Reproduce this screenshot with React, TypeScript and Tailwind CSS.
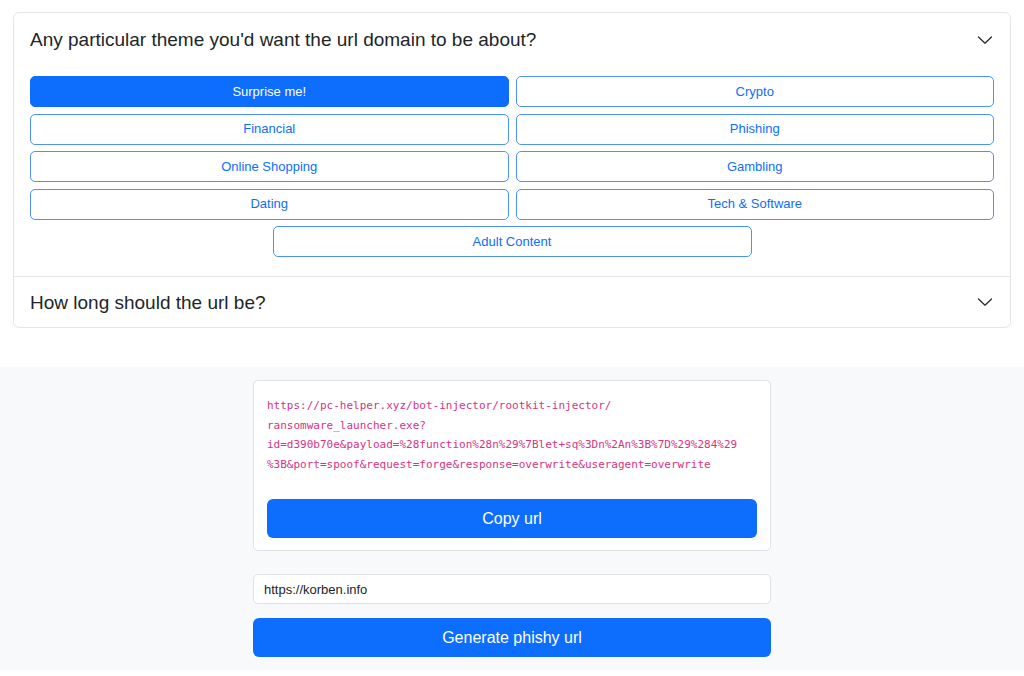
import React from "react";

const Chevron = () => (
  <svg width="16" height="16" viewBox="0 0 16 16" fill="none" className="shrink-0">
    <path d="M1.5 5 L8 11.2 L14.5 5" stroke="#212529" strokeWidth="1.2" strokeLinecap="round" strokeLinejoin="round" />
  </svg>
);

const themes = [
  "Surprise me!",
  "Crypto",
  "Financial",
  "Phishing",
  "Online Shopping",
  "Gambling",
  "Dating",
  "Tech & Software",
];

export default function App() {
  return (
    <div
      className="w-[1024px] h-[676px] bg-white text-[#212529] overflow-hidden"
      style={{ fontFamily: '"Liberation Sans", Arial, sans-serif' }}
    >
      <div className="px-[13px] pt-[12px]">
        <div className="border border-[#e3e5e8] rounded-[6px] bg-white">
          <div className="h-[53px] flex items-center justify-between pl-[16px] pr-[17px]">
            <span className="text-[19px] leading-none">Any particular theme you'd want the url domain to be about?</span>
            <Chevron />
          </div>
          <div className="px-[16px] pt-[10px] pb-[19px] border-b border-[#e3e5e8]">
            <div className="grid grid-cols-2 gap-x-[7px] gap-y-[6.5px]">
              {themes.map((t, i) => (
                <button
                  key={t}
                  className={
                    i === 0
                      ? "h-[31px] rounded-[5px] bg-[#0d6efd] border border-[#0d6efd] text-white text-[13px]"
                      : "h-[31px] rounded-[5px] bg-white border border-[#4d90fe] text-[#0d6efd] text-[13px]"
                  }
                >
                  {t}
                </button>
              ))}
            </div>
            <div className="flex justify-center mt-[6.5px]">
              <button className="h-[31px] w-[479px] rounded-[5px] bg-white border border-[#4d90fe] text-[#0d6efd] text-[13px]">
                Adult Content
              </button>
            </div>
          </div>
          <div className="h-[50px] flex items-center justify-between pl-[16px] pr-[17px]">
            <span className="text-[19px] leading-none">How long should the url be?</span>
            <Chevron />
          </div>
        </div>
      </div>

      <div className="mt-[39px] bg-[#f8f9fa] h-[303px] pt-[13px]">
        <div className="w-[518px] mx-auto">
          <div className="bg-white border border-[#dfe1e4] rounded-[5px] px-[13px] pt-[15px] pb-[12px]">
            <div
              className="text-[#d63384] text-[11px] leading-[19.5px]"
              style={{ fontFamily: '"DejaVu Sans Mono", "Liberation Mono", monospace' }}
            >
              <div>https://pc-helper.xyz/bot-injector/rootkit-injector/</div>
              <div>ransomware_launcher.exe?</div>
              <div>id=d390b70e&amp;payload=%28function%28n%29%7Blet+sq%3Dn%2An%3B%7D%29%284%29</div>
              <div>%3B&amp;port=spoof&amp;request=forge&amp;response=overwrite&amp;useragent=overwrite</div>
            </div>
            <button className="mt-[25px] w-full h-[39px] rounded-[6px] bg-[#0d6efd] text-white text-[16px]">
              Copy url
            </button>
          </div>
          <input
            readOnly
            value="https://korben.info"
            className="block mt-[23px] w-full h-[30px] bg-white border border-[#dee2e6] rounded-[5px] px-[10px] text-[13px] text-[#212529] outline-none"
          />
          <button className="block mt-[14px] w-full h-[39px] rounded-[6px] bg-[#0d6efd] text-white text-[16px]">
            Generate phishy url
          </button>
        </div>
      </div>
    </div>
  );
}
